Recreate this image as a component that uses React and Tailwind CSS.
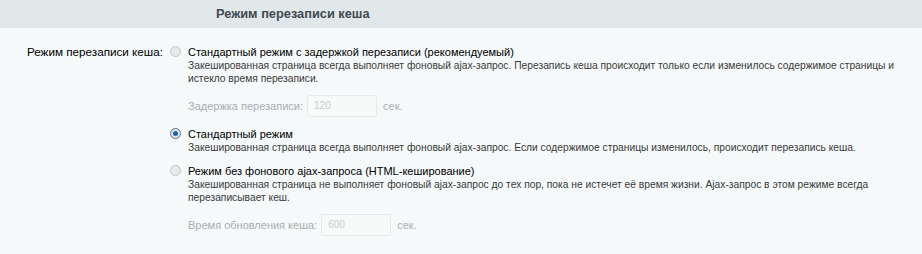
import { useState } from 'react'

const FONT = { fontFamily: '"Liberation Sans", Arial, sans-serif' }

function Radio({ checked }) {
  return (
    <span
      className={
        'mt-[1px] flex h-[11px] w-[11px] shrink-0 items-center justify-center rounded-full border ' +
        (checked ? 'border-[#5f6e78] bg-[#dfe7ec]' : 'border-[#bfc6ca] bg-[#e6eaeb]')
      }
    >
      {checked && <span className="h-[5px] w-[5px] rounded-full bg-[#1b64a6]" />}
    </span>
  )
}

function DelayField({ label, value }) {
  return (
    <div className="mt-[10px] flex items-center text-[11px] text-[#a9aeb1]">
      <span>{label}</span>
      <span className="ml-[4px] flex h-[22px] w-[70px] items-center rounded-[3px] border border-[#e4e9eb] bg-[#f8fafa] pl-[6px] text-[10px] text-[#c6cacc]">
        {value}
      </span>
      <span className="ml-[6px]">сек.</span>
    </div>
  )
}

const MODES = [
  {
    id: 'delay',
    title: 'Стандартный режим с задержкой перезаписи (рекомендуемый)',
    desc: 'Закешированная страница всегда выполняет фоновый ajax-запрос. Перезапись кеша происходит только если изменилось содержимое страницы и истекло время перезаписи.',
    field: { label: 'Задержка перезаписи:', value: '120' },
  },
  {
    id: 'standard',
    title: 'Стандартный режим',
    desc: 'Закешированная страница всегда выполняет фоновый ajax-запрос. Если содержимое страницы изменилось, происходит перезапись кеша.',
  },
  {
    id: 'html',
    title: 'Режим без фонового ajax-запроса (HTML-кеширование)',
    desc: 'Закешированная страница не выполняет фоновый ajax-запрос до тех пор, пока не истечет её время жизни. Ajax-запрос в этом режиме всегда перезаписывает кеш.',
    field: { label: 'Время обновления кеша:', value: '600' },
  },
]

export default function App() {
  const [mode] = useState('standard')

  return (
    <div className="h-[254px] w-[922px] bg-[#f5f9f9] text-[12px] leading-[14px] text-[#000]" style={FONT}>
      <div className="flex h-[28px] items-center bg-[#e0e8ea] pb-[1px] pl-[216px] text-[12.8px] font-bold text-[#3f4a52]">
        Режим перезаписи кеша
      </div>

      <div className="flex pt-[17px]">
        <div className="w-[164px] shrink-0 pr-[1px] text-right text-[11.7px] text-[#000]">Режим перезаписи кеша:</div>

        <div className="flex w-[756px] flex-col gap-[10px] pl-[6px]">
          {MODES.map(m => (
            <div key={m.id} className="flex gap-[7px]">
              <Radio checked={mode === m.id} />
              <div className="flex flex-col">
                <div className="text-[11px] text-[#000]">{m.title}</div>
                <div className="text-[10.25px] leading-[13px] text-[#3a3a3a]">{m.desc}</div>
                {m.field && <DelayField {...m.field} />}
              </div>
            </div>
          ))}
        </div>
      </div>
    </div>
  )
}
